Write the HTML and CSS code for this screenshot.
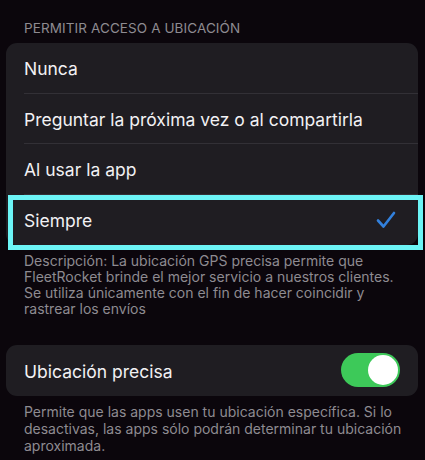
FILE: index.html
```html
<html>

<head>
    <meta charset="utf-8">
    <link rel="stylesheet" href="styles.css">
</head>

<body>
    <div class="section-title">PERMITIR ACCESO A UBICACIÓN</div>
    <div class="group">
        <div class="row"><div class="row-inner">Nunca</div></div>
        <div class="row"><div class="row-inner">Preguntar la próxima vez o al compartirla</div></div>
        <div class="row"><div class="row-inner">Al usar la app</div></div>
        <div class="row selected">
            <div class="row-inner">
                Siempre
                <svg class="check" width="20" height="18" viewBox="0 0 20 18">
                    <path d="M2 9.5 L7.5 15.5 L18 2" fill="none" stroke="#3280dc" stroke-width="2.6" stroke-linecap="round" stroke-linejoin="round" />
                </svg>
            </div>
            <div class="highlight"></div>
        </div>
    </div>
    <div class="footnote">Descripción: La ubicación GPS precisa permite que FleetRocket brinde el mejor servicio a nuestros clientes. Se utiliza únicamente con el fin de hacer coincidir y rastrear los envíos</div>

    <div class="group second">
        <div class="row"><div class="row-inner">
            Ubicación precisa
            <div class="toggle"><div class="knob"></div></div>
        </div></div>
    </div>
    <div class="footnote last">Permite que las apps usen tu ubicación específica. Si lo desactivas, las apps sólo podrán determinar tu ubicación aproximada.</div>
</body>

</html>
```

FILE: styles.css
```css
body {
    margin: 0;
    background-color: #0b060c;
    font-family: 'Inter', 'Noto Sans', sans-serif;
    color: #f2f1f4;
    width: 425px;
    height: 460px;
    overflow: hidden;
}

.section-title {
    padding: 20px 0 7px 24px;
    font-size: 13.5px;
    line-height: 16px;
    color: #8e8b91;
    letter-spacing: 0.1px;
}

.group {
    margin: 0 7px 0 6px;
    background-color: #1f1d22;
    border-radius: 11px;
}

.group.second {
    margin-top: 28px;
}

.row {
    position: relative;
    height: 50.5px;
    padding-left: 18px;
}

.row-inner {
    height: 100%;
    display: flex;
    align-items: center;
    justify-content: space-between;
    padding: 2px 18px 0 0;
    font-size: 17.5px;
    border-bottom: 1px solid #323036;
    box-sizing: border-box;
}

.row:last-child .row-inner {
    border-bottom: none;
}

.check {
    margin-right: 4px;
    margin-top: -1px;
}

.toggle {
    margin-top: -2px;
}

.highlight {
    position: absolute;
    left: 2px;
    right: -5px;
    top: 0;
    bottom: -5px;
    border: 5px solid #6cf4f6;
}

.footnote {
    padding: 8px 20px 0 24px;
    font-size: 14px;
    line-height: 16px;
    color: #8e8b91;
}

.footnote.last {
    padding-top: 7px;
    line-height: 17px;
}

.toggle {
    width: 59px;
    height: 34px;
    border-radius: 17px;
    background-color: #3dc959;
    display: flex;
    align-items: center;
    justify-content: flex-end;
    padding: 0 2px;
    box-sizing: border-box;
}

.knob {
    width: 30px;
    height: 30px;
    border-radius: 50%;
    background-color: #ffffff;
}
```
